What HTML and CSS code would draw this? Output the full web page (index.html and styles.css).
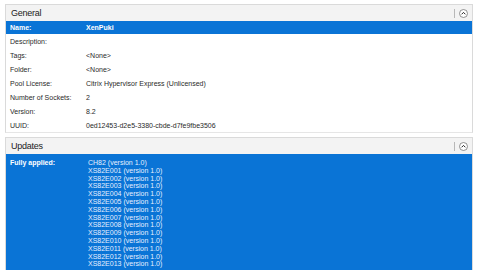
FILE: index.html
```html
<!DOCTYPE html>
<html>
<head>
<meta charset="utf-8">
<link rel="stylesheet" href="styles.css">
</head>
<body>
<div class="page">
  <section class="panel general">
    <div class="panel-head">
      <span class="title">General</span>
      <span class="sep"></span>
      <svg class="collapse" width="9" height="9" viewBox="0 0 9 9"><circle cx="4.5" cy="4.5" r="4" fill="#fff" stroke="#777" stroke-width="0.8"/><path d="M2.6 5.3 L4.5 3.4 L6.4 5.3" fill="none" stroke="#222" stroke-width="1"/></svg>
    </div>
    <div class="row sel"><span class="lbl">Name:</span><span class="val">XenPuki</span></div>
    <div class="row"><span class="lbl">Description:</span><span class="val"></span></div>
    <div class="row"><span class="lbl">Tags:</span><span class="val">&lt;None&gt;</span></div>
    <div class="row"><span class="lbl">Folder:</span><span class="val">&lt;None&gt;</span></div>
    <div class="row"><span class="lbl">Pool License:</span><span class="val">Citrix Hypervisor Express (Unlicensed)</span></div>
    <div class="row"><span class="lbl">Number of Sockets:</span><span class="val">2</span></div>
    <div class="row"><span class="lbl">Version:</span><span class="val">8.2</span></div>
    <div class="row"><span class="lbl">UUID:</span><span class="val">0ed12453-d2e5-3380-cbde-d7fe9fbe3506</span></div>
  </section>
  <section class="panel updates">
    <div class="panel-head">
      <span class="title">Updates</span>
      <span class="sep"></span>
      <svg class="collapse" width="9" height="9" viewBox="0 0 9 9"><circle cx="4.5" cy="4.5" r="4" fill="#fff" stroke="#777" stroke-width="0.8"/><path d="M2.6 5.3 L4.5 3.4 L6.4 5.3" fill="none" stroke="#222" stroke-width="1"/></svg>
    </div>
    <div class="urow">
      <span class="lbl">Fully applied:</span>
      <div class="list">
        <span>CH82 (version 1.0)</span>
        <span>XS82E001 (version 1.0)</span>
        <span>XS82E002 (version 1.0)</span>
        <span>XS82E003 (version 1.0)</span>
        <span>XS82E004 (version 1.0)</span>
        <span>XS82E005 (version 1.0)</span>
        <span>XS82E006 (version 1.0)</span>
        <span>XS82E007 (version 1.0)</span>
        <span>XS82E008 (version 1.0)</span>
        <span>XS82E009 (version 1.0)</span>
        <span>XS82E010 (version 1.0)</span>
        <span>XS82E011 (version 1.0)</span>
        <span>XS82E012 (version 1.0)</span>
        <span>XS82E013 (version 1.0)</span>
      </div>
    </div>
  </section>
</div>
</body>
</html>
```
FILE: styles.css
```css
html, body {
  margin: 0;
  padding: 0;
  background: #fff;
  overflow: hidden;
}
.page {
  width: 480px;
  height: 270px;
  overflow: hidden;
  padding: 4px 7px 0 5px;
  box-sizing: border-box;
  font-family: "Liberation Sans", Arial, sans-serif;
  font-size: 7px;
  color: #2a2a2a;
  display: flex;
  flex-direction: column;
  gap: 4px;
}
.panel {
  border: 1px solid #dadada;
  border-bottom-color: #e6e6e6;
}
.panel-head {
  height: 16px;
  background: #f3f3f3;
  display: flex;
  align-items: center;
  padding: 0 4px 0 5px;
}
.title {
  font-size: 9px;
  letter-spacing: -0.25px;
  color: #222;
  flex: 1;
}
.sep {
  width: 1px;
  height: 9px;
  background: #b8b8b8;
  margin-right: 4px;
}
.collapse {
  display: block;
}
.row {
  display: grid;
  grid-template-columns: 76px 1fr;
  height: 14px;
  align-items: center;
  padding-left: 4px;
}
.row.sel {
  height: 13px;
  background: #0a74d6;
  color: #fff;
  font-weight: 600;
}
.urow {
  display: grid;
  grid-template-columns: 78px 1fr;
  background: #0a74d6;
  color: #fff;
  padding: 5px 0 0 4px;
  height: 130px;
}
.urow .lbl {
  font-weight: 600;
  line-height: 7.8px;
}
.list {
  display: flex;
  flex-direction: column;
  line-height: 7.8px;
  color: #e6f0ff;
}
```
